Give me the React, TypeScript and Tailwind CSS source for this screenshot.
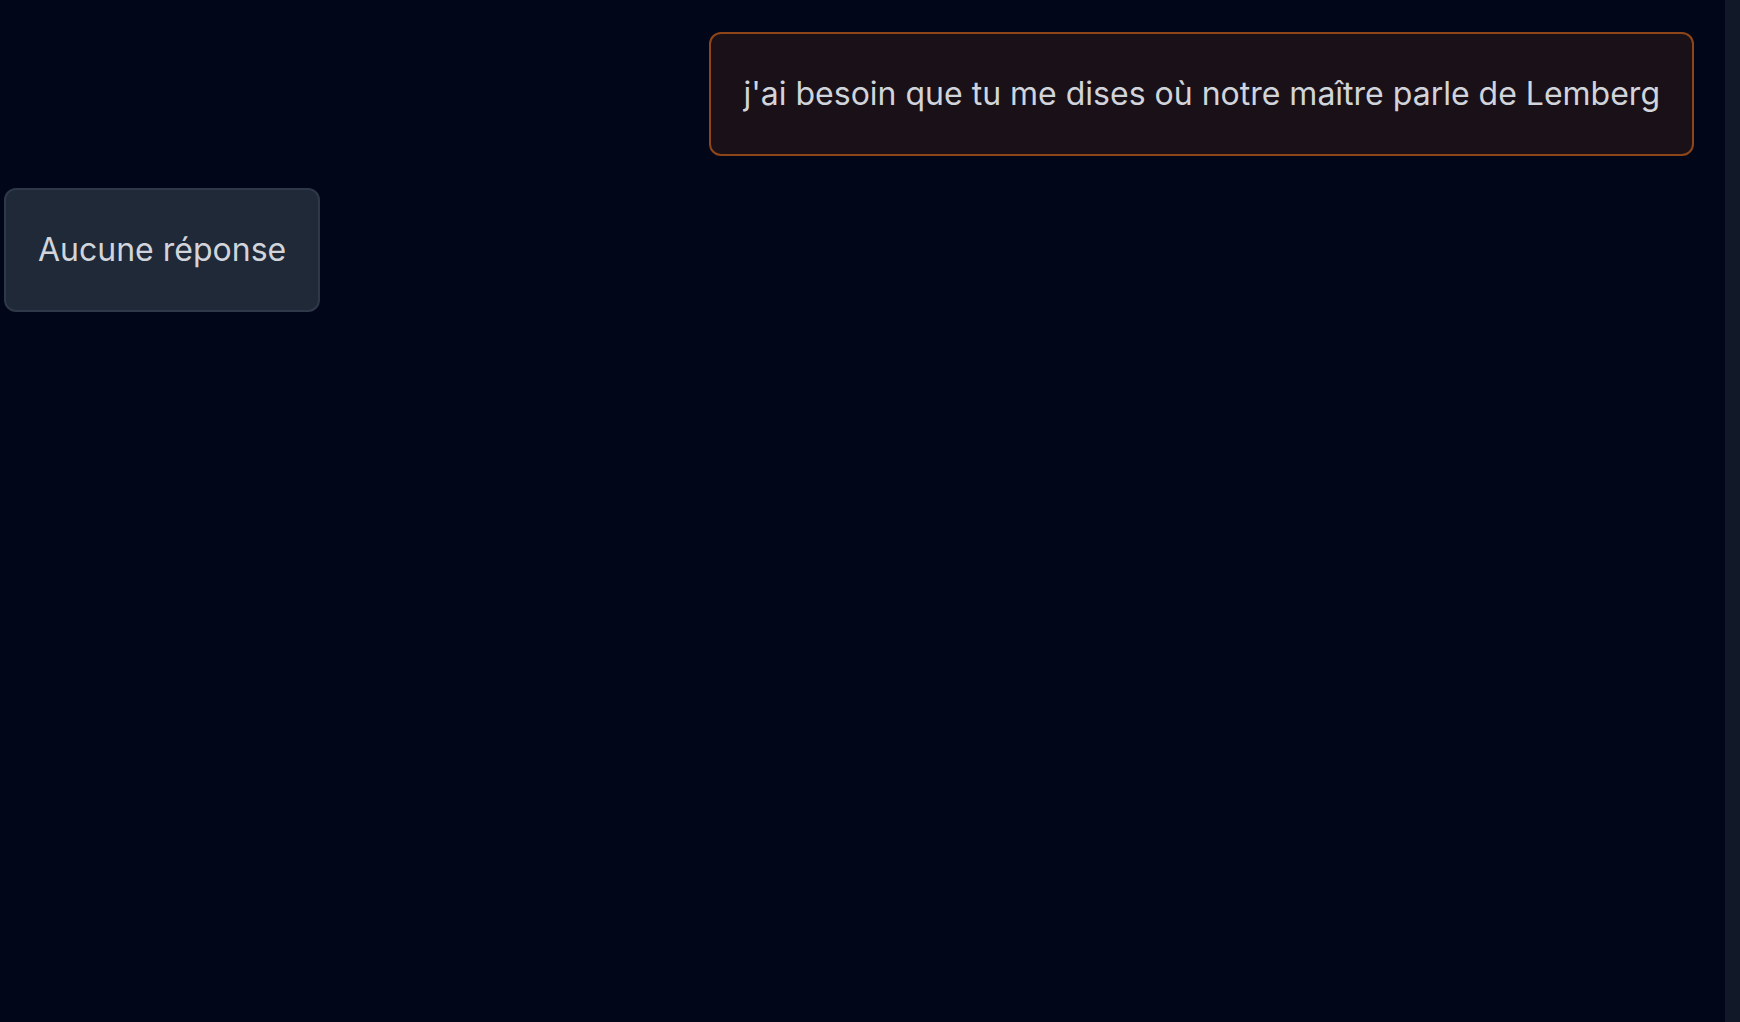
export default function App() {
  return (
    <div className="flex h-screen w-full bg-[#010618]" style={{ fontFamily: 'Inter, "Noto Sans", sans-serif' }}>
      {/* Messages */}
      <div className="flex-1 flex flex-col gap-8 pt-8 pl-1 pr-[31px]">
        <div className="self-end rounded-xl border-2 border-[#8e4518] bg-[#1a1118] px-8 py-8 text-[32px] leading-[56px] text-[#d1d5db]">
          j'ai besoin que tu me dises où notre maître parle de Lemberg
        </div>
        <div className="self-start rounded-xl border-2 border-[#2f3848] bg-[#1f2937] px-8 py-8 text-[32px] leading-[56px] text-[#d1d5db]">
          Aucune réponse
        </div>
      </div>
      {/* Scroll track */}
      <div className="w-[15px] h-full bg-[#111827]" />
    </div>
  );
}
